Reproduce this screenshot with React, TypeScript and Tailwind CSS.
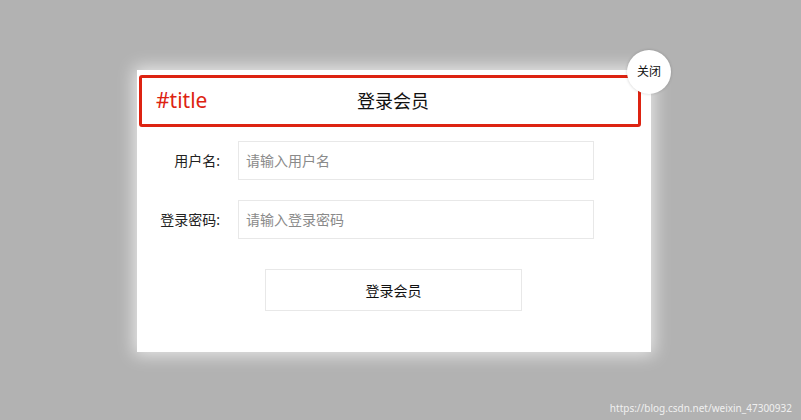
import React from 'react';

const font = { fontFamily: '"Microsoft YaHei", "Noto Sans", "Noto Sans CJK SC", sans-serif' };

const Field = ({ label, placeholder }: { label: string; placeholder: string }) => (
  <div className="flex items-center">
    <label className="w-[83px] mr-[18px] text-right text-[14px] text-[#222]">{label}</label>
    <input
      type="text"
      placeholder={placeholder}
      className="w-[356px] h-[39px] border border-[#e8e8e8] px-[7px] text-[14px] outline-none placeholder:text-[#8a8a8a]"
    />
  </div>
);

export default function App() {
  return (
    <div className="relative w-full h-[420px] bg-[#b2b2b2] pt-[70px] pl-[137px] overflow-hidden" style={font}>
      {/* Dialog */}
      <div className="relative w-[514px] h-[282px] bg-white shadow-[0_0_16px_3px_rgba(255,255,255,0.7)] pt-[5px] pl-[2px]">
        {/* Header */}
        <div className="relative w-[502px] h-[52px] border-[3px] border-[#dd2311] rounded-[3px] flex items-center justify-center pl-[6px]">
          <span className="absolute left-[14px] top-[8px] text-[21px] leading-[28px] text-[#dd2311]">#title</span>
          <span className="text-[18px] text-[#111]">登录会员</span>
        </div>

        {/* Form */}
        <div className="flex flex-col gap-[20px] mt-[14px] -ml-[2px]">
          <Field label="用户名:" placeholder="请输入用户名" />
          <Field label="登录密码:" placeholder="请输入登录密码" />
        </div>
        <button className="mt-[30px] ml-[126px] w-[257px] h-[42px] border border-[#e8e8e8] bg-white text-[14px] text-[#111]">
          登录会员
        </button>

        {/* Close */}
        <div className="absolute left-[490px] -top-[20px] w-[44px] h-[44px] rounded-full bg-white shadow-[0_0_3px_rgba(0,0,0,0.2)] flex items-center justify-center text-[12px] text-[#111]">
          关闭
        </div>
      </div>

      <div className="absolute right-[9px] bottom-[4px] text-[10px] text-[#f0f0f0]">
        https://blog.csdn.net/weixin_47300932
      </div>
    </div>
  );
}
